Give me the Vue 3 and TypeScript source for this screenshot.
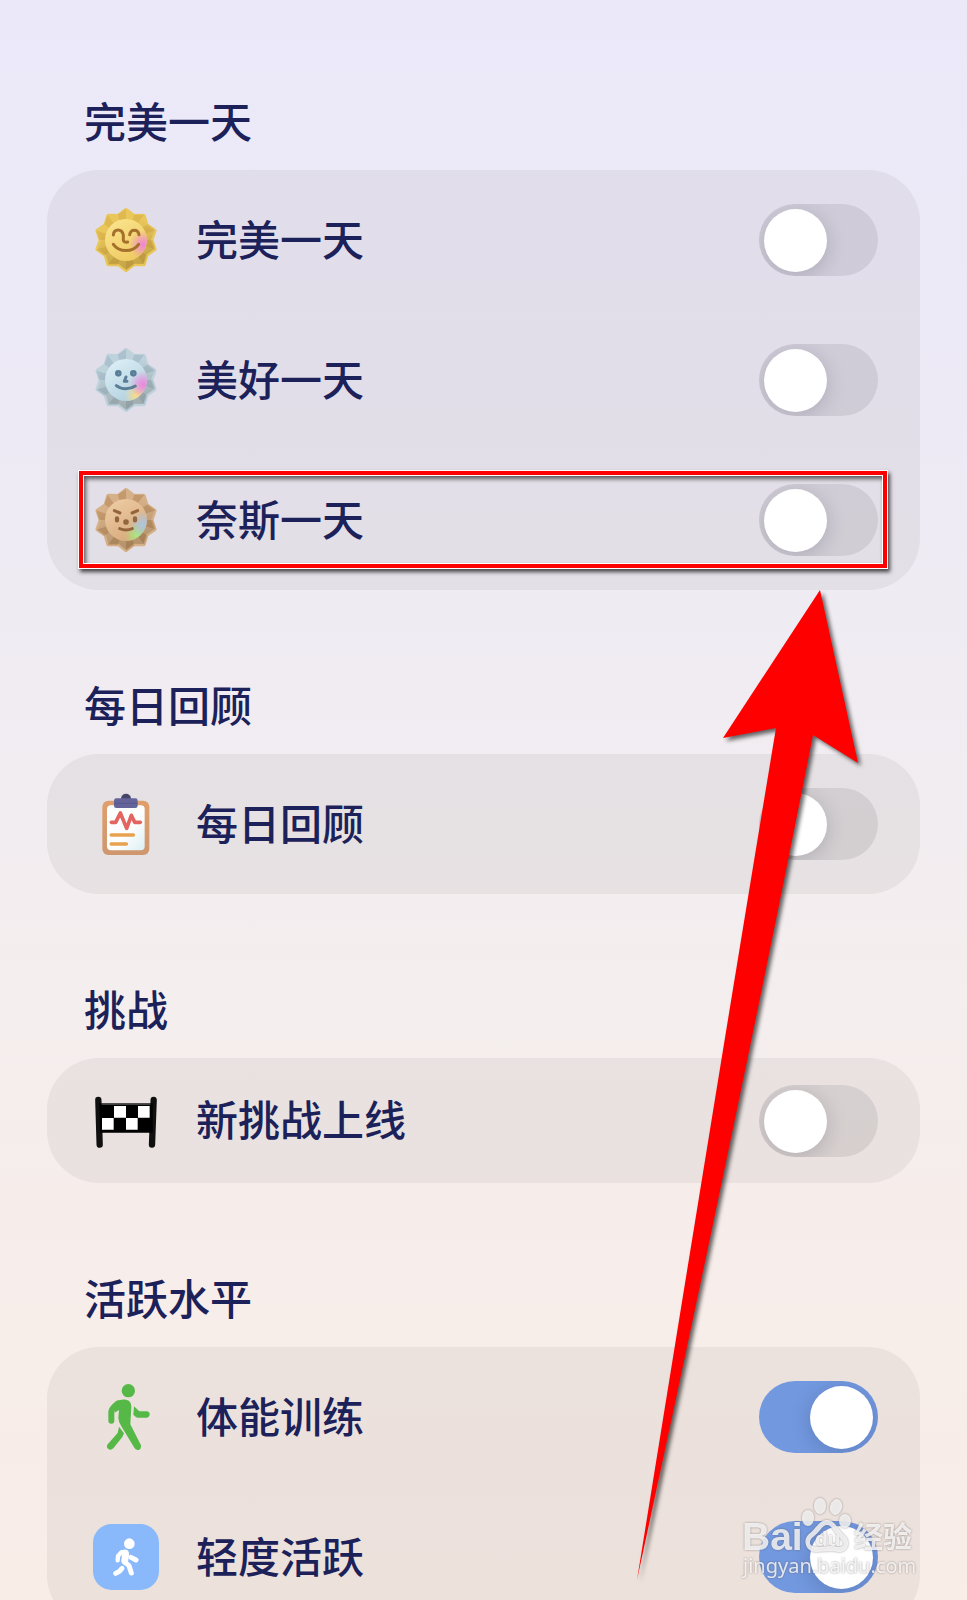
<script setup lang="ts">
import { reactive } from 'vue'

type IconName = 'gold' | 'silver' | 'bronze' | 'clipboard' | 'flag' | 'walk' | 'stroll'

interface Item {
  id: string
  label: string
  icon: IconName
  on: boolean
  marked?: boolean
}

interface Section {
  title: string
  compact?: boolean
  items: Item[]
}

const sections = reactive<Section[]>([
  {
    title: '完美一天',
    items: [
      { id: 'perfect-day', label: '完美一天', icon: 'gold', on: false },
      { id: 'good-day', label: '美好一天', icon: 'silver', on: false },
      { id: 'nice-day', label: '奈斯一天', icon: 'bronze', on: false, marked: true },
    ],
  },
  {
    title: '每日回顾',
    items: [{ id: 'daily-review', label: '每日回顾', icon: 'clipboard', on: false }],
  },
  {
    title: '挑战',
    compact: true,
    items: [{ id: 'new-challenge', label: '新挑战上线', icon: 'flag', on: false }],
  },
  {
    title: '活跃水平',
    items: [
      { id: 'training', label: '体能训练', icon: 'walk', on: true },
      { id: 'light-activity', label: '轻度活跃', icon: 'stroll', on: true },
    ],
  },
])

// Ten-pointed medal: every ray is split into a shaded and a lit facet.
const point = (r: number, deg: number) => {
  const a = (deg * Math.PI) / 180
  return `${(r * Math.sin(a)).toFixed(1)},${(-r * Math.cos(a)).toFixed(1)}`
}
const facets = Array.from({ length: 20 }, (_, i) => {
  const tip = Math.ceil(i / 2) * 36
  const valley = Math.floor(i / 2) * 36 + 18
  return { points: `0,0 ${point(93, tip)} ${point(80, valley)}`, lit: i % 2 === 0 }
})
const outline = Array.from({ length: 20 }, (_, i) => point(i % 2 ? 75 : 89, i * 18)).join(' ')

const medals: Record<string, { lit: string; shade: string; ink: string; face: [string, string] }> = {
  gold: { lit: '#eac75b', shade: '#dfb84f', ink: '#a5702c', face: ['#fbe692', '#efcb62'] },
  silver: { lit: '#bed2dc', shade: '#abc1ce', ink: '#5a7e97', face: ['#dff2f8', '#b4d1df'] },
  bronze: { lit: '#d5b088', shade: '#c3996d', ink: '#94653c', face: ['#f0cfa8', '#d7aa7c'] },
}
</script>

<template>
  <main class="page">
    <div class="content">
      <section v-for="section in sections" :key="section.title" class="section">
        <h2 class="title">{{ section.title }}</h2>
        <div class="card">
          <div v-for="item in section.items" :key="item.id" class="row" :class="{ compact: section.compact }">
            <svg v-if="medals[item.icon]" class="icon" viewBox="-99 -99 198 198" aria-hidden="true">
              <defs>
                <linearGradient :id="item.icon + '-face'" x1="0" y1="0" x2="0.6" y2="1">
                  <stop offset="0" :stop-color="medals[item.icon].face[0]" />
                  <stop offset="1" :stop-color="medals[item.icon].face[1]" />
                </linearGradient>
                <linearGradient :id="item.icon + '-depth'" x1="0" y1="0" x2="0.3" y2="1">
                  <stop offset="0.35" stop-color="#302000" stop-opacity="0" />
                  <stop offset="1" stop-color="#302000" stop-opacity="0.2" />
                </linearGradient>
                <radialGradient :id="item.icon + '-glow'" gradientUnits="userSpaceOnUse" cx="52" cy="14" r="42">
                  <stop offset="0" :stop-color="item.icon === 'bronze' ? '#a9c8e6' : '#f083dc'" />
                  <stop offset="1" :stop-color="item.icon === 'bronze' ? '#a9c8e6' : '#f083dc'" stop-opacity="0" />
                </radialGradient>
                <radialGradient :id="item.icon + '-glow2'" gradientUnits="userSpaceOnUse" cx="34" cy="46" r="38">
                  <stop offset="0" :stop-color="item.icon === 'bronze' ? '#a4ef7e' : '#ffdf7e'" />
                  <stop offset="1" :stop-color="item.icon === 'bronze' ? '#a4ef7e' : '#ffdf7e'" stop-opacity="0" />
                </radialGradient>
              </defs>
              <polygon
                :points="outline"
                :fill="medals[item.icon].lit"
                :stroke="medals[item.icon].lit"
                stroke-width="14"
                stroke-linejoin="round"
              />
              <polygon
                v-for="(facet, i) in facets"
                :key="i"
                :points="facet.points"
                :fill="facet.lit ? medals[item.icon].lit : medals[item.icon].shade"
              />
              <polygon :points="outline" :fill="`url(#${item.icon}-depth)`" />
              <circle r="63" :fill="`url(#${item.icon}-face)`" />
              <circle v-if="item.icon !== 'gold'" r="63" :fill="`url(#${item.icon}-glow2)`" />
              <circle r="63" :fill="`url(#${item.icon}-glow)`" />
              <g fill="none" :stroke="medals[item.icon].ink" stroke-width="9" stroke-linecap="round" stroke-linejoin="round">
                <template v-if="item.icon === 'gold'">
                  <path d="M-38-15C-36-35-12-35-8-15V0Q-7 8 5 6" />
                  <path d="M11-16C14-34 36-34 39-16" />
                  <path d="M-38 13C-20 38 20 38 38 13" />
                </template>
                <template v-else-if="item.icon === 'silver'">
                  <path d="M-29 17C-14 29 12 29 28 18" />
                  <path d="M0-9L-5 4H3" />
                  <circle cx="-23" cy="-20" r="5.5" />
                  <circle cx="22" cy="-20" r="5.5" />
                </template>
                <template v-else>
                  <path d="M-35-28L-18-21M35-28L18-21M-19 26Q0 34 19 26" />
                  <path d="M-27-5V1M27-5V1" stroke-width="13" />
                  <circle cy="6" r="4" />
                </template>
              </g>
            </svg>

            <svg v-else-if="item.icon === 'clipboard'" class="icon" viewBox="69 33 198 198" aria-hidden="true">
              <defs>
                <linearGradient id="board" x1="0" y1="0" x2="0" y2="1">
                  <stop offset="0" stop-color="#df9f6c" />
                  <stop offset="1" stop-color="#cf976f" />
                </linearGradient>
                <linearGradient id="paper" x1="0" y1="0" x2="1" y2="1">
                  <stop offset="0.6" stop-color="#fcfdfd" />
                  <stop offset="1" stop-color="#daeff3" />
                </linearGradient>
              </defs>
              <rect x="97" y="62" width="141" height="163" rx="18" fill="url(#board)" />
              <rect x="111" y="76" width="113" height="135" rx="12" fill="url(#paper)" />
              <circle cx="168" cy="56" r="15" fill="#454568" />
              <rect x="132" y="55" width="71" height="29" rx="7" fill="#64649b" />
              <path d="M133 70H202" stroke="#51518a" stroke-width="2" />
              <path d="M124 127H137L151 99L170 145L184 106L194 127H211" fill="none" stroke="#e46560" stroke-width="11" stroke-linecap="round" stroke-linejoin="round" />
              <path d="M124 165H190M124 192H169" stroke="#e7a14f" stroke-width="11" stroke-linecap="round" />
            </svg>

            <svg v-else-if="item.icon === 'flag'" class="icon" viewBox="69 22 198 198" aria-hidden="true">
              <path d="M85 58L89 192M251 58L246 192" stroke="#101010" stroke-width="19" stroke-linecap="round" />
              <path d="M88 68H248V156H90Z" fill="#000" />
              <path d="M95 70H241" stroke="#555" stroke-width="4" />
              <path d="M132 76H168V111H132ZM204 76H239V111H204ZM96 112H131V147H96ZM168 112H203V147H168Z" fill="#fff" />
            </svg>

            <svg v-else-if="item.icon === 'walk'" class="icon" viewBox="69 42 198 198" aria-hidden="true">
              <g fill="#56b947" stroke="#56b947" stroke-linecap="round" stroke-linejoin="round">
                <circle cx="175" cy="62" r="20" stroke="none" />
                <path d="M144 100Q124 116 124 125V152" fill="none" stroke-width="18" />
                <path d="M134 102C144 89 157 88 168 89Q184 92 184 110L181 163L213 226Q215 236 206 240Q197 241 193 233L154 169Q145 154 145 143L147 120L134 128Z" stroke="none" />
                <path d="M147 170L162 190L157 201L130 235Q122 243 114 236Q108 230 113 223L143 189Z" stroke="none" />
                <path d="M192 109L208 124H230Q239 125 239 133Q239 142 230 143H203Q198 143 195 139L190 134Z" stroke="none" />
              </g>
            </svg>

            <svg v-else class="icon" viewBox="69 462 198 198" aria-hidden="true">
              <rect x="69" y="462" width="198" height="198" rx="56" fill="#89b9fb" />
              <g fill="none" stroke="#fff" stroke-width="13" stroke-linecap="round" stroke-linejoin="round">
                <circle cx="178" cy="521" r="16" fill="#fff" stroke="none" />
                <path d="M143 571L144 558L154 547" />
                <path d="M183 562L198 570M184 609L177 587L162 575" stroke-width="15" />
                <path d="M137 610L148 604L156 595" stroke-width="15" />
                <path d="M148 545Q162 536 171 540Q178 544 177 555L174 577L165 586Q153 580 154 570L156 555Z" fill="#fff" stroke="none" />
              </g>
            </svg>

            <label class="name" :for="item.id">{{ item.label }}</label>
            <input :id="item.id" v-model="item.on" class="switch" type="checkbox" role="switch" />
            <span v-if="item.marked" class="marker" aria-hidden="true"></span>
          </div>
        </div>
      </section>

      <svg class="arrow" viewBox="630 580 240 1010" aria-hidden="true">
        <path d="M820 590L858 763L813 735Q745 1080 637 1580Q725 1035 776 728L723 738Z" fill="#f00" />
      </svg>

      <svg class="watermark" viewBox="735 1490 190 100" role="img" aria-label="Baidu 经验">
        <g class="ink">
          <text x="742" y="1550" class="brand">Bai</text>
          <ellipse cx="808" cy="1518" rx="6" ry="8" />
          <ellipse cx="820" cy="1506" rx="6" ry="8" />
          <ellipse cx="836" cy="1507" rx="6" ry="8" transform="rotate(15 836 1507)" />
          <ellipse cx="845" cy="1521" rx="6" ry="7" />
          <path fill-rule="evenodd" d="M827 1520C819 1520 816 1529 809 1534C802 1540 806 1552 816 1552C823 1552 831 1550 838 1552C848 1553 851 1542 845 1536C838 1530 835 1520 827 1520ZM827 1525C832 1525 834 1533 840 1538C846 1543 844 1548 838 1547C831 1545 823 1547 817 1547C809 1547 808 1541 813 1537C820 1532 822 1525 827 1525Z" />
          <text x="815" y="1546" class="du">du</text>
          <text x="854" y="1548" class="cjk">经验</text>
          <text x="743" y="1573" class="url">jingyan.baidu.com</text>
        </g>
      </svg>
    </div>
  </main>
</template>

<style>
body {
  margin: 0;
}
</style>

<style scoped>
.page {
  height: 100vh;
  overflow-x: hidden;
  overflow-y: auto;
  scrollbar-width: none;
  background: linear-gradient(180deg, #ebe9f9 0%, #edeaf6 25%, #f0ecf2 42%, #f4eeee 62%, #f7edea 80%, #f8ede7 100%);
  color: #1c2259;
  font-family: 'Noto Sans CJK SC', 'Noto Sans', sans-serif;
}

.content {
  position: relative;
  box-sizing: border-box;
  padding: 6px 47px 0;
}

.title {
  margin: 0;
  padding: 84px 37px 20px;
}

.title,
.name {
  font-size: 42px;
  font-weight: 500;
  line-height: 60px;
}

.card {
  border-radius: 52px;
  background: rgba(50, 40, 30, 0.06);
}

.row {
  position: relative;
  display: flex;
  align-items: center;
  height: 140px;
  padding: 0 42px 0 46px;
}

.row.compact {
  height: 125px;
}

.icon {
  flex: none;
  width: 66px;
  height: 66px;
}

.name {
  flex: 1;
  margin-left: 37px;
  padding-bottom: 5px;
}

.switch {
  flex: none;
  appearance: none;
  box-sizing: border-box;
  width: 119px;
  height: 72px;
  margin: 0;
  padding: 5px;
  border-radius: 36px;
  background: rgba(50, 45, 60, 0.1);
  overflow: hidden;
  cursor: pointer;
}

.switch::before {
  content: '';
  display: block;
  width: 63px;
  height: 63px;
  border-radius: 50%;
  background: #fff;
  box-shadow: 0 4px 20px rgba(20, 20, 50, 0.18);
}

.switch:checked {
  background: #7298df;
}

.switch:checked::before {
  margin-left: auto;
}

.marker {
  position: absolute;
  inset: 20px 32px 21px 31px;
  border: 1px solid #fff;
  box-shadow:
    inset 0 0 0 4px #f00,
    inset 0 0 0 5px #fff,
    inset 2px 3px 4px 5px rgba(0, 0, 0, 0.6),
    2px 3px 4px rgba(0, 0, 0, 0.7);
  pointer-events: none;
}

.arrow {
  position: absolute;
  top: 580px;
  right: 97px;
  width: 240px;
  height: 1010px;
  filter: drop-shadow(3px 3px 2px rgba(0, 0, 0, 0.6));
  pointer-events: none;
}

.watermark {
  position: absolute;
  top: 1490px;
  right: 42px;
  width: 190px;
  height: 100px;
  filter: drop-shadow(0 0 1px rgba(90, 80, 80, 0.7));
  pointer-events: none;
}

.ink {
  fill: #fff;
  opacity: 0.8;
}

.brand {
  font: bold 39px 'Liberation Sans', sans-serif;
}

.du {
  font: bold 21px 'Liberation Sans', sans-serif;
}

.cjk {
  font: bold 29px 'Noto Sans CJK SC', sans-serif;
}

.url {
  font: 20px 'Noto Sans', sans-serif;
}
</style>
